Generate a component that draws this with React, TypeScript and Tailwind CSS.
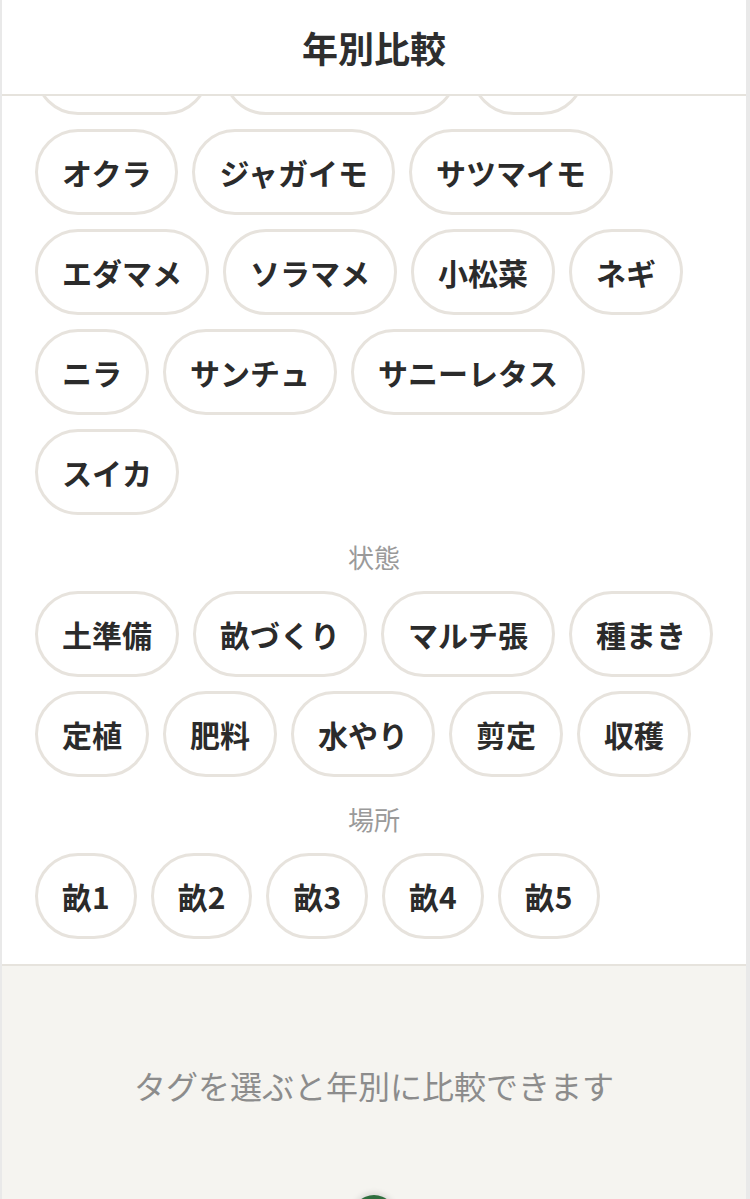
// Year comparison screen — tag picker over an empty-state panel.
const CROPS = [
  "キュウリ",
  "トウモロコシ",
  "ナス",
  "オクラ",
  "ジャガイモ",
  "サツマイモ",
  "エダマメ",
  "ソラマメ",
  "小松菜",
  "ネギ",
  "ニラ",
  "サンチュ",
  "サニーレタス",
  "スイカ",
];
const STATES = ["土準備", "畝づくり", "マルチ張", "種まき", "定植", "肥料", "水やり", "剪定", "収穫"];
const PLACES = ["畝1", "畝2", "畝3", "畝4", "畝5"];

function Chip({ label }: { label: string }) {
  return (
    <button
      type="button"
      className="flex h-[86px] items-center rounded-full border-[3px] border-[#e7e3dd] bg-white px-6 text-[30px] font-bold leading-none text-[#2b2b2b]"
    >
      {label}
    </button>
  );
}

function ChipRow({ items }: { items: string[] }) {
  return (
    <div className="flex flex-wrap gap-[14px]">
      {items.map((t) => (
        <Chip key={t} label={t} />
      ))}
    </div>
  );
}

function SectionLabel({ children }: { children: string }) {
  return (
    <p className="mb-4 mt-6 text-center text-[26px] leading-[36px] text-[#9a9a9a]">{children}</p>
  );
}

export default function App() {
  return (
    <div
      className="relative flex h-[1199px] flex-col overflow-hidden border-l-2 border-r-4 border-[#e9e9e9] bg-white"
      style={{ fontFamily: '"Noto Sans CJK JP", "Noto Sans", sans-serif' }}
    >
      {/* Header */}
      <header className="flex h-[96px] shrink-0 items-center justify-center border-b-2 border-[#e6e3dd] bg-white">
        <h1 className="text-[36px] font-bold text-[#2e2e2e]">年別比較</h1>
      </header>

      {/* Tag picker (scrolled) */}
      <div className="shrink-0 overflow-hidden">
        <div className="-mt-[67px] px-[33px] pb-[25px]">
          <ChipRow items={CROPS} />
          <SectionLabel>状態</SectionLabel>
          <ChipRow items={STATES} />
          <SectionLabel>場所</SectionLabel>
          <ChipRow items={PLACES} />
        </div>
      </div>

      {/* Empty state */}
      <div className="flex flex-1 flex-col items-center border-t-2 border-[#e6e3dd] bg-[#f5f4f0] pt-[95px]">
        <p className="text-[32px] text-[#8c8c8c]">タグを選ぶと年別に比較できます</p>
      </div>

      {/* Floating button peeking from the bottom */}
      <div className="absolute left-1/2 top-[1195px] h-[44px] w-[44px] -translate-x-1/2 rounded-full bg-[#2f6e3e] shadow-[0_-2px_6px_rgba(0,0,0,0.12)]" />
    </div>
  );
}
